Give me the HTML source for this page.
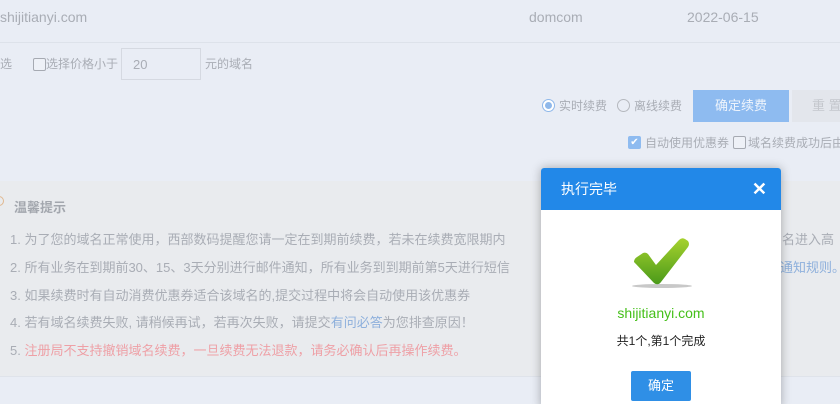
<!DOCTYPE html>
<html><head><meta charset="utf-8"><style>
*{margin:0;padding:0;box-sizing:border-box}
html,body{width:840px;height:404px;overflow:hidden}
body{background:#e9edf5;font-family:"Liberation Sans","Noto Sans CJK SC",sans-serif;position:relative;color:#a9adb5}
.a{position:absolute;white-space:nowrap}
.cb{position:absolute;width:13px;height:13px;border:1px solid #a6aab2;border-radius:2px;background:#eef1f7}
</style></head><body>
<div class="a" style="left:0;top:9px;font-size:14px;">shijitianyi.com</div>
<div class="a" style="left:529px;top:9px;font-size:14px;">domcom</div>
<div class="a" style="left:687px;top:9px;font-size:14px;">2022-06-15</div>
<div class="a" style="left:0;top:42px;width:840px;height:1px;background:#dde2ea"></div>
<div class="a" style="left:0;top:55px;font-size:12px;">选</div>
<div class="cb" style="left:33px;top:58px"></div>
<div class="a" style="left:46px;top:55px;font-size:12px;">选择价格小于</div>
<div class="a" style="left:121px;top:48px;width:80px;height:32px;border:1px solid #d5d9e1;font-size:13px;padding:8px 0 0 11px">20</div>
<div class="a" style="left:205px;top:55px;font-size:12px;">元的域名</div>
<div class="a" style="left:542px;top:99px;width:13px;height:13px;border:1px solid #8fb8ea;border-radius:50%;background:#fff"><div style="margin:2px;width:7px;height:7px;border-radius:50%;background:#8fb8ea"></div></div>
<div class="a" style="left:559px;top:97px;font-size:12px;">实时续费</div>
<div class="a" style="left:617px;top:99px;width:13px;height:13px;border:1px solid #b5b8be;border-radius:50%"></div>
<div class="a" style="left:634px;top:97px;font-size:12px;">离线续费</div>
<div class="a" style="left:693px;top:90px;width:96px;height:32px;background:#8ebbf0;color:#eef4fc;font-size:13px;text-align:center;line-height:32px">确定续费</div>
<div class="a" style="left:792px;top:90px;width:60px;height:32px;background:#e3e6ec;color:#c4c7cd;font-size:13px;line-height:32px;padding-left:20px">重 置</div>
<div class="a" style="left:628px;top:136px;width:13px;height:13px;background:#8ebbf0;border-radius:2px;color:#fff;font-size:10px;line-height:13px;text-align:center">✔</div>
<div class="a" style="left:645px;top:134px;font-size:12px;">自动使用优惠券</div>
<div class="cb" style="left:733px;top:136px"></div>
<div class="a" style="left:748px;top:134px;font-size:12px;">域名续费成功后由</div>
<div class="a" style="left:0;top:181px;width:840px;height:196px;background:#e9ebee;border-bottom:1px solid #dfe3ea"></div>
<div class="a" style="left:-6px;top:196px;width:10px;height:10px;border:1px solid #e0b890;border-radius:50%"></div>
<div class="a" style="left:14px;top:197px;font-size:13px;font-weight:bold;color:#a3a7ae">温馨提示</div>
<div class="a" style="left:10px;top:229px;font-size:13px;">1. 为了您的域名正常使用，西部数码提醒您请一定在到期前续费，若未在续费宽限期内</div>
<div class="a" style="left:782px;top:229px;font-size:13px;">名进入高</div>
<div class="a" style="left:10px;top:257px;font-size:13px;">2. 所有业务在到期前30、15、3天分别进行邮件通知，所有业务到到期前第5天进行短信</div>
<div class="a" style="left:780px;top:257px;font-size:13px;color:#8eb0dc">通知规则。</div>
<div class="a" style="left:10px;top:285px;font-size:13px;">3. 如果续费时有自动消费优惠券适合该域名的,提交过程中将会自动使用该优惠券</div>
<div class="a" style="left:10px;top:312px;font-size:13px;">4. 若有域名续费失败, 请稍候再试，若再次失败，请提交<span style="color:#8eb0dc">有问必答</span>为您排查原因！</div>
<div class="a" style="left:10px;top:340px;font-size:13px;">5. <span style="color:#eea0a6">注册局不支持撤销域名续费，一旦续费无法退款，请务必确认后再操作续费。</span></div>
<div class="a" style="left:541px;top:168px;width:240px;height:240px;background:#fff;box-shadow:0 0 10px rgba(0,0,0,.3);border-radius:3px 3px 0 0;overflow:hidden">
 <div style="height:42px;background:#2288e8;color:#fff;font-size:14px;line-height:42px;padding-left:20px;position:relative">执行完毕<span style="position:absolute;right:14px;top:0;font-size:18px;font-weight:bold">✕</span></div>
 <svg style="position:absolute;left:90px;top:68px" width="62" height="56" viewBox="0 0 62 56">
  <defs><linearGradient id="g" x1="0" y1="0" x2="0" y2="1"><stop offset="0" stop-color="#a6d22e"/><stop offset="1" stop-color="#4a9a1a"/></linearGradient></defs>
  <ellipse cx="31" cy="50" rx="30" ry="2" fill="#c8c8c8"/>
  <path d="M3 26 Q3 23 6 21 L12 17 Q15 16 17 18 L25 29 L48 4 Q51 1 54 3 L57 5 Q59 8 57 11 L30 46 Q27 50 23 47 Z" fill="url(#g)"/>
 </svg>
 <div style="position:absolute;top:137px;width:100%;text-align:center;color:#45c01a;font-size:14px">shijitianyi.com</div>
 <div style="position:absolute;top:164px;width:100%;text-align:center;color:#222;font-size:12px">共1个,第1个完成</div>
 <div style="position:absolute;left:90px;top:203px;width:60px;height:30px;background:#2f8fe6;color:#fff;font-size:13px;text-align:center;line-height:30px;border-radius:2px">确定</div>
</div>
</body></html>
